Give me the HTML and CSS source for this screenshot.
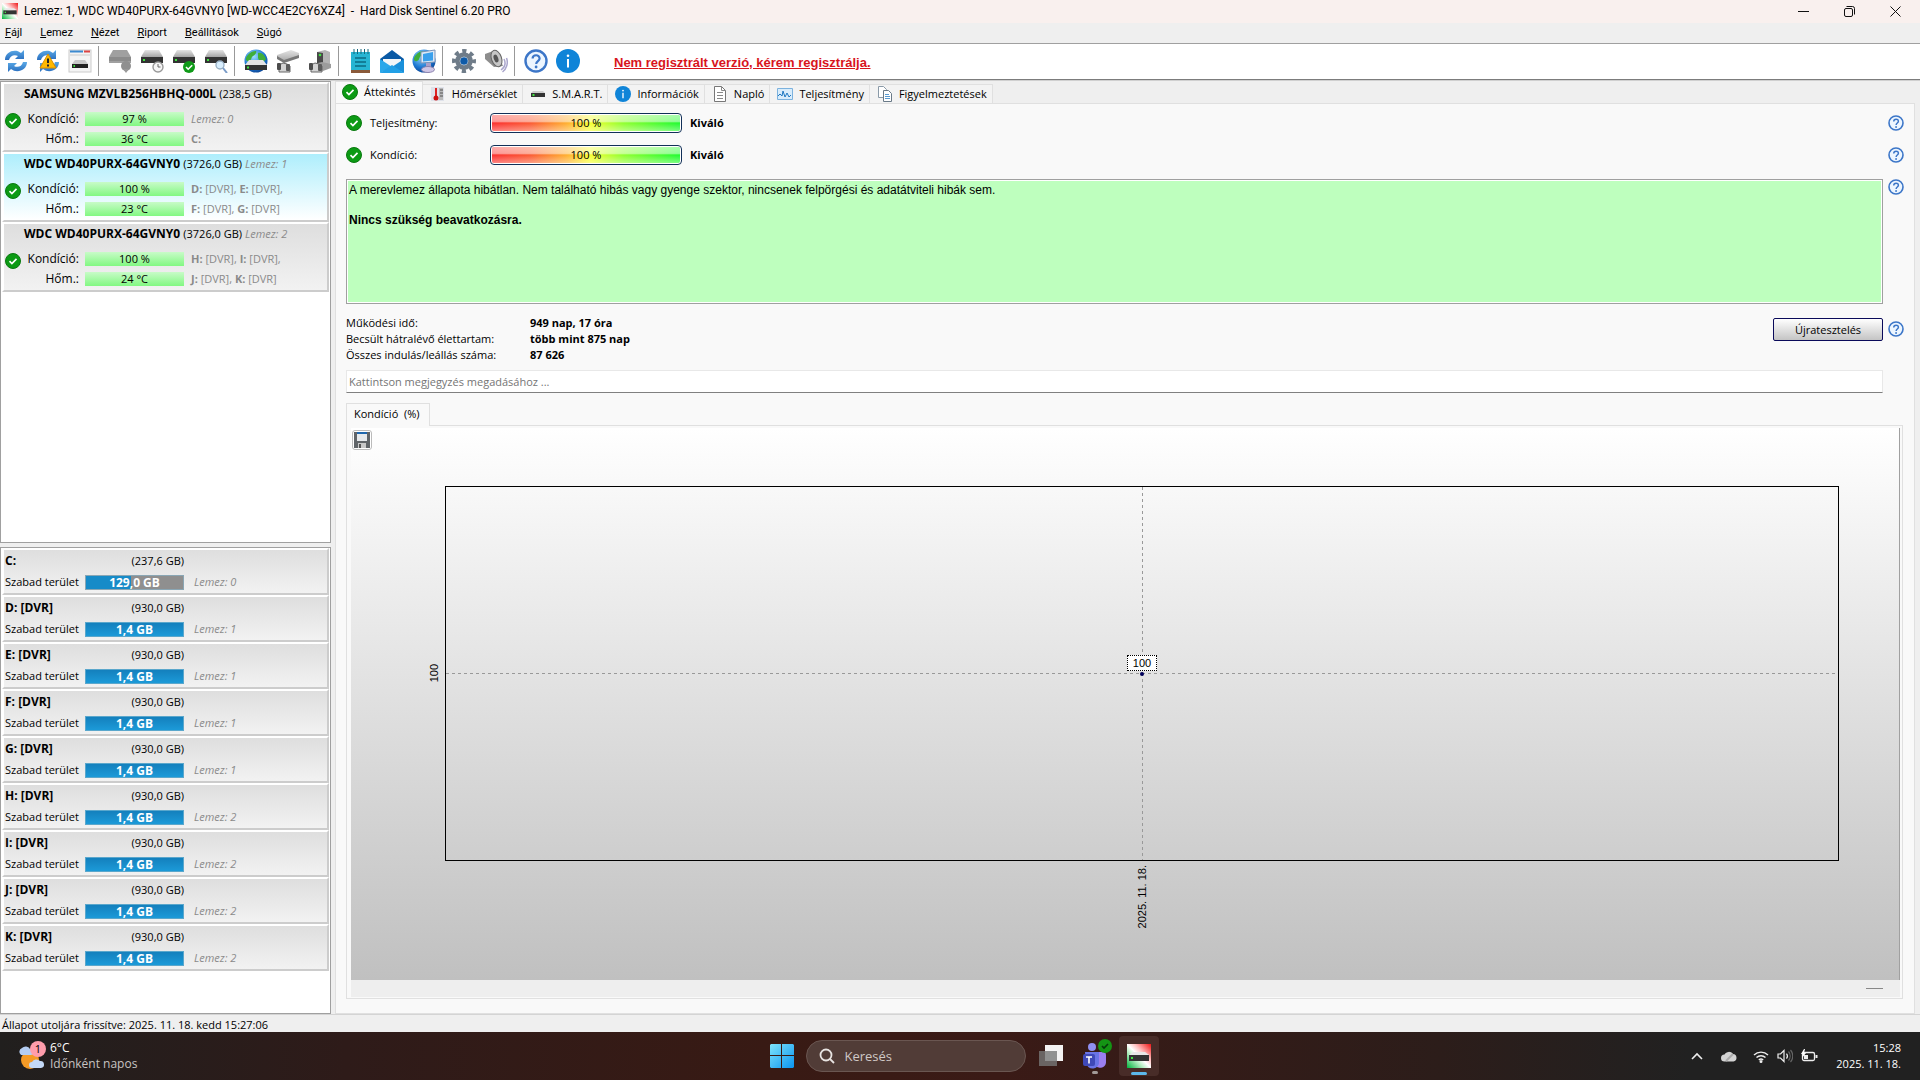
FILE: index.html
```
<!DOCTYPE html>
<html lang="hu">
<head>
    <meta charset="UTF-8">
    <meta name="viewport" content="width=device-width, initial-scale=1.0">
    <title>Hard Disk Sentinel</title>
    <link rel="stylesheet" href="styles.css">
</head>
<body>
    <!-- Shared icons -->
    <svg class="defs" width="0" height="0" aria-hidden="true">
        <defs>
            <linearGradient id="gBlue" x1="0" y1="0" x2="0" y2="1"><stop offset="0" stop-color="#5aa9e6"/><stop offset="1" stop-color="#2a6fc0"/></linearGradient>
            <linearGradient id="gGrey" x1="0" y1="0" x2="0" y2="1"><stop offset="0" stop-color="#e4e4e4"/><stop offset="1" stop-color="#a4a4a4"/></linearGradient>
            <linearGradient id="gApp" x1="0" y1="1" x2="1" y2="0"><stop offset="0" stop-color="#00b43c"/><stop offset=".35" stop-color="#b8efc4"/><stop offset=".5" stop-color="#ffffff"/><stop offset=".65" stop-color="#ffc4c4"/><stop offset="1" stop-color="#ee1515"/></linearGradient>
            <radialGradient id="gGlobe" cx=".4" cy=".3" r=".8"><stop offset="0" stop-color="#9fe0ff"/><stop offset=".6" stop-color="#1b76d2"/><stop offset="1" stop-color="#0a3a86"/></radialGradient>
            <symbol id="i-ok" viewBox="0 0 16 16">
                <circle cx="8" cy="8" r="7.5" fill="#0c9a14" stroke="#0a7a10"/>
                <path d="M4.5 8.2l2.4 2.3 4.6-4.6" fill="none" stroke="#fff" stroke-width="1.7"/>
            </symbol>
            <symbol id="i-info" viewBox="0 0 24 24">
                <circle cx="12" cy="12" r="12" fill="#0f84d8"/>
                <circle cx="12" cy="6.8" r="1.3" fill="#fff"/><path d="M12 10v8.5" stroke="#fff" stroke-width="2"/>
            </symbol>
            <symbol id="i-help" viewBox="0 0 24 24">
                <circle cx="12" cy="12" r="10.5" fill="#edf6ff" stroke="#3c76c8" stroke-width="2.4"/>
                <path d="M8.6 9.6c0-4.4 7-4.4 7-.2 0 2.6-3.4 2.8-3.4 5.6" fill="none" stroke="#3c76c8" stroke-width="2.2"/>
                <circle cx="12.1" cy="18" r="1.4" fill="#3c76c8"/>
            </symbol>
            <symbol id="i-refresh" viewBox="0 0 24 24">
                <path d="M1 11C1 4 8 .5 14 2.300l3 1.700L20 1v9h-9l3-3C10.500 5 6 6.500 5 11z" fill="url(#gBlue)"/>
                <path d="M23 13c0 7-7 10.500-13 8.700l-3-1.700L4 23v-9h9l-3 3c3.500 2 8 .5 9-4z" fill="url(#gBlue)"/>
            </symbol>
            <symbol id="i-disk" viewBox="0 0 24 24">
                <path d="M5 1h14l4 7H1z" fill="url(#gGrey)"/>
                <rect x="1" y="8" width="22" height="6" fill="#333"/>
                <rect x="3" y="10" width="2" height="2" fill="#3fe23f"/>
            </symbol>
            <symbol id="i-app" viewBox="0 0 24 24">
                <path d="M0 0h24v24H0z" fill="url(#gApp)"/>
                <path d="M6 8h12l4 3H2z" fill="#e8e8e8"/>
                <path d="M2 11h20v6H2z" fill="#333"/><rect x="4" y="13" width="2" height="2" fill="#3fe23f"/>
            </symbol>
            <symbol id="i-globe" viewBox="0 0 24 24">
                <circle cx="12" cy="12" r="11.500" fill="url(#gGlobe)"/>
                <path d="M3 7c3-4 6-5 9-5 1 2-1 4-3 5s-1 4-4 5-4-2-2-5zM14 4c4-1 7 3 8 6l-3 4c-3 0-4-3-5-5z" fill="#3fae3a"/>
            </symbol>
            <symbol id="i-handshake" viewBox="0 0 24 24">
                <path d="M3 16l4-2 4 1 3 2v6H3z" fill="#d4d4d4" stroke="#666"/>
                <rect x="1" y="14" width="4" height="7" rx="1" fill="#4c4c4c"/><rect x="10" y="15" width="4" height="7" rx="1" fill="#5c5c5c"/>
            </symbol>
        </defs>
    </svg>

    <header class="titlebar">
        <svg class="icon16"><use href="#i-app"/></svg>
        <h1>Lemez: 1, WDC WD40PURX-64GVNY0 [WD-WCC4E2CY6XZ4]&nbsp; -&nbsp; Hard Disk Sentinel 6.20 PRO</h1>
        <div class="window-controls">
            <button aria-label="Kis méret"><svg width="11" height="11"><path d="M0 5.500h11" stroke="#111"/></svg></button>
            <button aria-label="Előző méret"><svg width="11" height="11" fill="none" stroke="#111"><rect x=".5" y="2.500" width="8" height="8" rx="1.500"/><path d="M2.500 .5h6a2 2 0 0 1 2 2v6"/></svg></button>
            <button aria-label="Bezárás"><svg width="11" height="11"><path d="M.5 .5l10 10M10.500 .5l-10 10" stroke="#111"/></svg></button>
        </div>
    </header>

    <nav class="menu">
        <button><u>F</u>ájl</button>
        <button><u>L</u>emez</button>
        <button><u>N</u>ézet</button>
        <button><u>R</u>iport</button>
        <button><u>B</u>eállítások</button>
        <button><u>S</u>úgó</button>
    </nav>

    <div class="toolbar">
        <button aria-label="Frissítés"><svg><use href="#i-refresh"/></svg></button>
        <button aria-label="Frissítés figyelmeztetéssel"><svg viewBox="0 0 24 24"><use href="#i-refresh"/><path d="M12 5l8 14H4z" fill="#ffb900" stroke="#d98f00" stroke-linejoin="round"/><path d="M12 9.500v4.500M12 15.500v2" stroke="#222" stroke-width="2"/></svg></button>
        <button aria-label="Lemezpanel"><svg viewBox="0 0 24 24"><rect x="1" y="1" width="22" height="22" fill="#f4f4f4" stroke="#ccc"/><path d="M2 2.500h13" stroke="#3c8ad0" stroke-width="2"/><path d="M16 2.500h6" stroke="#d44" stroke-width="2"/><path d="M2 6h20" stroke="#ccc"/><path d="M7 11h10l3 4H4z" fill="#c8c8c8"/><path d="M4 15h16v4H4z" fill="#222"/><path d="M5.500 16h1.500v2H5.500z" fill="#3fe23f"/></svg></button>
        <span class="sep"></span>
        <button aria-label="Lemez leállítása" disabled><svg viewBox="0 0 24 24"><path d="M5 1h14l4 7v6H1V8z" fill="#a0a0a0"/><path d="M1 8h22v4H1z" fill="#8b8b8b"/><circle cx="18" cy="17" r="5" fill="#8f8f8f"/><path d="M15 20l3 4 3-4z" fill="#999"/></svg></button>
        <button aria-label="Rövid teszt"><svg viewBox="0 0 24 24"><use href="#i-disk"/><circle cx="18" cy="18" r="5" fill="#f6f6f6" stroke="#999" stroke-width="1.400"/><path d="M18 15v3h2.500" fill="none" stroke="#666"/></svg></button>
        <button aria-label="Teljes teszt"><svg viewBox="0 0 24 24"><use href="#i-disk"/><circle cx="17" cy="18" r="6" fill="#0f9a18"/><path d="M14 18l2.200 2.200 4-4" fill="none" stroke="#fff" stroke-width="1.600"/></svg></button>
        <button aria-label="Felület teszt"><svg viewBox="0 0 24 24"><use href="#i-disk"/><circle cx="16" cy="16" r="4" fill="#d9efff" stroke="#9ab0c4" stroke-width="1.400"/><path d="M19 19l4 5" stroke="#7a9cc8" stroke-width="2"/></svg></button>
        <span class="sep"></span>
        <button aria-label="Online"><svg viewBox="0 0 24 24"><use href="#i-globe"/><path d="M5 11h14l4 5H1z" fill="#e4e4e4"/><path d="M1 16h22v5H1z" fill="#333"/><path d="M3 17.500h2v2H3z" fill="#3fe23f"/></svg></button>
        <button aria-label="Lemez csatlakozó"><svg viewBox="0 0 24 24"><path d="M1 6l14-5 8 3v4L8 13 1 9z" fill="url(#gGrey)"/><path d="M1 7l7 4 15-5v3L8 14 1 10z" fill="#777"/><use href="#i-handshake"/></svg></button>
        <button aria-label="Lemez művelet"><svg viewBox="0 0 24 24"><path d="M9 3l8-2 5 2v13l-6 3-7-3z" fill="#b4b4b4"/><path d="M9 3l6 1v12l-6-2z" fill="#484848"/><circle cx="12" cy="6" r="1.300" fill="#3fe23f"/><path d="M6 15l8-2 9 2v4l-8 3z" fill="#9c9c9c"/><use href="#i-handshake"/></svg></button>
        <span class="sep"></span>
        <button aria-label="Riport"><svg viewBox="0 0 24 24"><path d="M3 3h19v19H3z" fill="#27b5d3"/><path d="M3 21h19v3H3z" fill="#8a5a3a"/><path d="M6 0v5M9.500 0v5M13 0v5M16.500 0v5M20 0v5" stroke="#17677a"/><path d="M7 9h11M7 13h11M7 17h11" stroke="#0c6b84" stroke-width="1.500"/></svg></button>
        <button aria-label="E-mail"><svg viewBox="0 0 24 24"><path d="M0 10L12 1l12 9v4H0z" fill="#0b5aa5"/><path d="M3 10h18v5l-9 6-9-6z" fill="#f3f6f8"/><path d="M0 10l12 8-12 6z" fill="#2aa8ea"/><path d="M24 10l-12 8 12 6z" fill="#1a90da"/><path d="M0 24l12-8 12 8z" fill="#22a0e6"/></svg></button>
        <button aria-label="Hálózat"><svg viewBox="0 0 24 24"><svg x="0" y="0" width="15" height="15"><use href="#i-globe"/></svg><path d="M9 3l14-2v12L9 14z" fill="#dce8f6" stroke="#7b93b8"/><path d="M11 5l10-2v8.500l-10 1z" fill="#3aa0ec"/><path d="M14 14h5v5h-5z" fill="#a99fc8"/><ellipse cx="16" cy="20.500" rx="6.500" ry="3" fill="#cfc6e6" stroke="#8a82ad"/></svg></button>
        <span class="sep"></span>
        <button aria-label="Beállítások"><svg viewBox="0 0 24 24"><circle cx="12" cy="12" r="10" fill="none" stroke="#6f7c89" stroke-width="4" stroke-dasharray="4.200 3.654" stroke-dashoffset="2.100"/><circle cx="12" cy="12" r="6.500" fill="#fff" stroke="#6f7c89" stroke-width="4.500"/><circle cx="12" cy="12" r="3.800" fill="#0e5aa8"/></svg></button>
        <button aria-label="Hang"><svg viewBox="0 0 24 24"><path d="M1 5L12 1l7 16-9 1-9-8z" fill="#8d8d8d"/><ellipse cx="12.500" cy="9.500" rx="5" ry="8.500" transform="rotate(-20 12.500 9.500)" fill="#c6c6c6" stroke="#666"/><ellipse cx="12" cy="9.500" rx="2.200" ry="4" transform="rotate(-20 12 9.500)" fill="#555"/><path d="M20 10c2 4 1 8-3 11M22.500 9c2 5 0 11-4 14" fill="none" stroke="#aaa6cc" stroke-width="1.500"/></svg></button>
        <span class="sep"></span>
        <button aria-label="Súgó"><svg><use href="#i-help"/></svg></button>
        <button aria-label="Névjegy"><svg><use href="#i-info"/></svg></button>
        <a class="register" href="#">Nem regisztrált verzió, kérem regisztrálja.</a>
    </div>

    <main>
        <aside class="sidebar">
            <section class="list">
                <article class="disk">
                    <h2>SAMSUNG MZVLB256HBHQ-000L <small>(238,5 GB)</small></h2>
                    <svg class="icon16"><use href="#i-ok"/></svg>
                    <span class="label">Kondíció:</span><span class="bar">97 %</span><i>Lemez: 0</i>
                    <span class="label">Hőm.:</span><span class="bar">36 °C</span><span class="parts"><b>C:</b></span>
                </article>
                <article class="disk selected">
                    <h2>WDC WD40PURX-64GVNY0 <small>(3726,0 GB) <i>Lemez: 1</i></small></h2>
                    <svg class="icon16"><use href="#i-ok"/></svg>
                    <span class="label">Kondíció:</span><span class="bar">100 %</span><span class="parts"><b>D:</b> [DVR], <b>E:</b> [DVR],</span>
                    <span class="label">Hőm.:</span><span class="bar">23 °C</span><span class="parts"><b>F:</b> [DVR], <b>G:</b> [DVR]</span>
                </article>
                <article class="disk">
                    <h2>WDC WD40PURX-64GVNY0 <small>(3726,0 GB) <i>Lemez: 2</i></small></h2>
                    <svg class="icon16"><use href="#i-ok"/></svg>
                    <span class="label">Kondíció:</span><span class="bar">100 %</span><span class="parts"><b>H:</b> [DVR], <b>I:</b> [DVR],</span>
                    <span class="label">Hőm.:</span><span class="bar">24 °C</span><span class="parts"><b>J:</b> [DVR], <b>K:</b> [DVR]</span>
                </article>
            </section>

            <section class="list">
                <article class="drive">
                    <h2>C:</h2><span class="size">(237,6 GB)</span>
                    <span>Szabad terület</span><span class="bar half">129,0 GB</span><i>Lemez: 0</i>
                </article>
                <article class="drive">
                    <h2>D: [DVR]</h2><span class="size">(930,0 GB)</span>
                    <span>Szabad terület</span><span class="bar">1,4 GB</span><i>Lemez: 1</i>
                </article>
                <article class="drive">
                    <h2>E: [DVR]</h2><span class="size">(930,0 GB)</span>
                    <span>Szabad terület</span><span class="bar">1,4 GB</span><i>Lemez: 1</i>
                </article>
                <article class="drive">
                    <h2>F: [DVR]</h2><span class="size">(930,0 GB)</span>
                    <span>Szabad terület</span><span class="bar">1,4 GB</span><i>Lemez: 1</i>
                </article>
                <article class="drive">
                    <h2>G: [DVR]</h2><span class="size">(930,0 GB)</span>
                    <span>Szabad terület</span><span class="bar">1,4 GB</span><i>Lemez: 1</i>
                </article>
                <article class="drive">
                    <h2>H: [DVR]</h2><span class="size">(930,0 GB)</span>
                    <span>Szabad terület</span><span class="bar">1,4 GB</span><i>Lemez: 2</i>
                </article>
                <article class="drive">
                    <h2>I: [DVR]</h2><span class="size">(930,0 GB)</span>
                    <span>Szabad terület</span><span class="bar">1,4 GB</span><i>Lemez: 2</i>
                </article>
                <article class="drive">
                    <h2>J: [DVR]</h2><span class="size">(930,0 GB)</span>
                    <span>Szabad terület</span><span class="bar">1,4 GB</span><i>Lemez: 2</i>
                </article>
                <article class="drive">
                    <h2>K: [DVR]</h2><span class="size">(930,0 GB)</span>
                    <span>Szabad terület</span><span class="bar">1,4 GB</span><i>Lemez: 2</i>
                </article>
            </section>
        </aside>

        <section class="content">
            <div class="tabs">
                <button class="active"><svg class="icon16"><use href="#i-ok"/></svg>Áttekintés</button>
                <button><svg class="icon16" viewBox="0 0 16 16"><path d="M1 1h13v14H1z" fill="#dfe2ea"/><path d="M9 2h4v12H9z" fill="#b9b9b9"/><path d="M10 4h3M10 7h3M10 10h3" stroke="#555"/><path d="M6 2v9" stroke="#d22" stroke-width="2"/><circle cx="6" cy="12" r="2.500" fill="#c11"/></svg>Hőmérséklet</button>
                <button><svg class="icon16" viewBox="0 0 16 16"><path d="M3 5h10l2 2H1z" fill="#ccc"/><path d="M1 7h14v4H1z" fill="#333"/><path d="M2.500 8h2v2h-2z" fill="#3fe23f"/></svg>S.M.A.R.T.</button>
                <button><svg class="icon16"><use href="#i-info"/></svg>Információk</button>
                <button><svg class="icon16" viewBox="0 0 16 16"><path d="M2.500 .5h7l4 4v11h-11z" fill="#fff" stroke="#777"/><path d="M9.500 .5v4h4M5 6.500h6M5 9.500h6M5 12.500h6" fill="none" stroke="#888"/></svg>Napló</button>
                <button><svg class="icon16" viewBox="0 0 16 16"><path d="M.5 2.500h15v11H.5z" fill="#d8ecfb" stroke="#7cb2de"/><path d="M1 10l2-2 2 2 1-5 2 6 2-4 2 4 2-2" fill="none" stroke="#1f78c2"/></svg>Teljesítmény</button>
                <button><svg class="icon16" viewBox="0 0 16 16"><path d="M1.500 .5h5l3 3v8h-8z" fill="#fff" stroke="#8a9aa8"/><path d="M6.500 4.500h5l3 3v8h-8z" fill="#fff" stroke="#6a7a88"/><path d="M8 8.500h4M8 10.500h5M8 12.500h5" stroke="#5a9ad0"/></svg>Figyelmeztetések</button>
            </div>

            <div class="page">
                <div class="row gauge-row">
                    <svg class="icon16"><use href="#i-ok"/></svg>
                    <span class="name">Teljesítmény:</span>
                    <div class="gauge">100 %</div>
                    <b>Kiváló</b>
                    <button class="help" aria-label="Súgó"><svg class="icon16"><use href="#i-help"/></svg></button>
                </div>
                <div class="row gauge-row">
                    <svg class="icon16"><use href="#i-ok"/></svg>
                    <span class="name">Kondíció:</span>
                    <div class="gauge">100 %</div>
                    <b>Kiváló</b>
                    <button class="help" aria-label="Súgó"><svg class="icon16"><use href="#i-help"/></svg></button>
                </div>

                <div class="row message-row">
                    <div class="message">
                        <p>A merevlemez állapota hibátlan. Nem található hibás vagy gyenge szektor, nincsenek felpörgési és adatátviteli hibák sem.</p>
                        <p><b>Nincs szükség beavatkozásra.</b></p>
                    </div>
                    <button class="help" aria-label="Súgó"><svg class="icon16"><use href="#i-help"/></svg></button>
                </div>

                <div class="row stats-row">
                    <dl class="stats">
                        <dt>Működési idő:</dt><dd>949 nap, 17 óra</dd>
                        <dt>Becsült hátralévő élettartam:</dt><dd>több mint 875 nap</dd>
                        <dt>Összes indulás/leállás száma:</dt><dd>87 626</dd>
                    </dl>
                    <button class="retest">Újratesztelés</button>
                    <button class="help" aria-label="Súgó"><svg class="icon16"><use href="#i-help"/></svg></button>
                </div>

                <input class="comment" type="text" aria-label="Megjegyzés" placeholder="Kattintson megjegyzés megadásához ...">

                <div class="chart-tabs"><button>Kondíció&nbsp; (%)</button></div>
                <div class="chart-page">
                    <div class="chart">
                        <button class="save" aria-label="Mentés"><svg class="icon16" viewBox="0 0 16 16"><path d="M0 0h16v16H0z" fill="#606468"/><path d="M3 2h10v7H3z" fill="#e6e9ec"/><path d="M3 0h10v2H3z" fill="#1f67ae"/><path d="M4 11h8v5H4z" fill="#c8c8c8"/><path d="M5 12h2v4H5z" fill="#555"/></svg></button>
                        <span class="y-label">100</span>
                        <div class="plot">
                            <span class="point"></span>
                            <span class="tip">100</span>
                        </div>
                        <span class="x-label">2025. 11. 18.</span>
                    </div>
                    <div class="zoom-bar"><span></span></div>
                </div>
            </div>
        </section>
    </main>

    <div class="status">Állapot utoljára frissítve: 2025. 11. 18. kedd 15:27:06</div>

    <footer class="taskbar">
        <button class="weather">
            <svg width="28" height="30" viewBox="0 0 28 30"><circle cx="12" cy="19" r="9" fill="#f49a26"/><path d="M3 14a4 4 0 0 1 1-7 5 5 0 0 1 8 1 3 3 0 0 1 1 6z" fill="#b4cdf2"/><path d="M14 27a3 3 0 0 1 0-6 5 5 0 0 1 8-1 3.500 3.500 0 0 1 1 7z" fill="#c3d8f6"/><circle cx="20" cy="8" r="8" fill="#ff9dab"/><text x="20" y="12" text-anchor="middle">1</text></svg>
            <span><b>6°C</b><br>Időnként napos</span>
        </button>
        <div class="apps">
            <button aria-label="Start"><svg width="24" height="24"><defs><linearGradient id="gWin" x1="0" y1="0" x2="1" y2="1"><stop offset="0" stop-color="#7fe4fb"/><stop offset="1" stop-color="#0a94f0"/></linearGradient></defs><path d="M1 0h10v11H0V1zM12 0h11l1 1v10H12zM0 12h11v12H1l-1-1zM12 12h12v11l-1 1H12z" fill="url(#gWin)"/></svg></button>
            <label class="search">
                <svg width="16" height="16" fill="none" stroke="#e8e4e2" stroke-width="1.800"><circle cx="7" cy="7" r="5.500"/><path d="M11 11l4 4"/></svg>
                <input type="text" placeholder="Keresés" aria-label="Keresés">
            </label>
            <button aria-label="Feladatnézet"><svg width="24" height="24"><path d="M6 1h18v16H6z" fill="#f4f2f2"/><path d="M0 7h18v15H0z" fill="#777" fill-opacity=".8"/></svg></button>
            <button class="teams" aria-label="Teams"><svg width="30" height="36" viewBox="0 0 30 36"><circle cx="9" cy="9" r="4" fill="#8f8ff0"/><path d="M12 14h9a3 3 0 0 1 2 3v6a6 6 0 0 1-11 4z" fill="#9a7ff0"/><path d="M2 14h14v9a6 6 0 0 1-13 2z" fill="#6a74e6"/><rect x="0" y="16" width="12" height="12" rx="2" fill="#3f49b8"/><path d="M3 19h6M6 19v6.500" stroke="#fff" stroke-width="1.600"/><circle cx="22" cy="8" r="7" fill="#149414"/><path d="M19 8l2 2 4-4" fill="none" stroke="#053a0a" stroke-width="1.600"/><rect x="9" y="33" width="6" height="3" rx="1.500" fill="#a29a98"/></svg></button>
            <button class="running" aria-label="Hard Disk Sentinel"><svg width="24" height="24"><use href="#i-app"/></svg></button>
        </div>
        <div class="tray">
            <svg width="12" height="8"><path d="M1 7l5-5 5 5" fill="none" stroke="#eee" stroke-width="1.600"/></svg>
            <svg class="cloud" width="16" height="12"><path d="M3.500 11.500a3.500 3.500 0 0 1 0-7A5 5 0 0 1 12 4a3.800 3.800 0 0 1 .5 7.500z" fill="#d4d4d4"/><path d="M5 11l7-7" stroke="#aaa" stroke-width="2"/></svg>
            <svg width="16" height="13" fill="none" stroke="#eee" stroke-width="1.400"><path d="M1 5a10 10 0 0 1 14 0M3.500 7.500a6.500 6.500 0 0 1 9 0M5.800 10a3.400 3.400 0 0 1 4.400 0"/><circle cx="8" cy="11.500" r=".8"/></svg>
            <svg width="16" height="14" fill="none" stroke="#eee" stroke-width="1.200"><path d="M1 5h2.500L7 1.500v11L3.500 9H1z"/><path d="M9.500 4.500a4 4 0 0 1 0 5"/><path d="M11.500 2.500a7 7 0 0 1 0 9M13.500 1a9 9 0 0 1 0 12" stroke="#666"/></svg>
            <svg width="17" height="14"><rect x="1.500" y="3.500" width="12" height="8" rx="1.500" fill="none" stroke="#eee" stroke-width="1.300"/><path d="M3 6h4v4H3zM14.500 6h2v3h-2z" fill="#eee"/><path d="M3 0L0 5h2L1 9l4-5H3l1-4z" fill="#fff"/></svg>
            <time>15:28<br>2025. 11. 18.</time>
        </div>
    </footer>
</body>
</html>
```
FILE: styles.css
```
:root {
    --face: #efefef;
    --page: #f9f9f9;
    --border: #a0a0a0;
    --light-border: #e0e0e0;
    --muted: #8a8a8a;
}

* {
    margin: 0;
    padding: 0;
    box-sizing: border-box;
}

body {
    height: 100vh;
    padding-right: 11px;
    display: flex;
    flex-direction: column;
    background: #fff;
    color: #000;
    font: 11px/16px "Open Sans", "Noto Sans", sans-serif;
}

button, input {
    font: inherit;
    color: inherit;
    background: none;
    border: none;
}

svg {
    display: block;
    flex: none;
}

.defs {
    position: absolute;
}

.icon16 {
    width: 16px;
    height: 16px;
}

/* Title and menu */
.titlebar {
    height: 23px;
    padding: 0 2px 1px;
    display: flex;
    align-items: center;
    gap: 6px;
    background: #f9f0ee;
}

.titlebar h1 {
    flex: 1;
    font: 12px/20px Roboto, sans-serif;
}

.window-controls {
    display: flex;
}

.window-controls button {
    width: 46px;
    height: 20px;
    display: flex;
    align-items: center;
    justify-content: center;
}

.menu {
    height: 20px;
    padding-left: 5px;
    display: flex;
    gap: 18px;
    background: var(--face);
    font-family: Roboto, sans-serif;
}

/* Toolbar */
.toolbar {
    height: 38px;
    padding-bottom: 1px;
    display: flex;
    align-items: center;
    background: #fff;
    border-top: 1px solid var(--border);
    border-bottom: 2px groove #d0d0d0;
}

.toolbar button {
    width: 32px;
    height: 32px;
    padding: 4px;
}

.toolbar svg {
    width: 24px;
    height: 24px;
}

.toolbar .sep {
    width: 6px;
    height: 30px;
    margin-left: 2px;
    border-left: 1px solid #999;
}

.register {
    margin: 3px 0 0 30px;
    color: #d8141c;
    font: bold 13px/16px "Liberation Sans", Arial, sans-serif;
}

main {
    flex: 1;
    min-height: 0;
    display: flex;
    gap: 4px;
    background: var(--face);
}

/* Disk and drive lists */
.sidebar {
    width: 331px;
    display: grid;
    grid-template-rows: 461fr 466fr;
    gap: 4px;
}

.list {
    min-height: 0;
    overflow: hidden;
    padding: 0 1px;
    background: #fff;
    border: 1px solid var(--border);
}

.list article {
    display: grid;
    align-items: center;
    border: 2px solid;
    border-color: #fff #ccc #ccc #fff;
    background: linear-gradient(#dedede, #f2f2f2);
    white-space: nowrap;
}

.list h2 {
    align-self: start;
    font-size: 12px;
    line-height: 18px;
}

.list i {
    color: var(--muted);
}

.bar {
    height: 14px;
    line-height: 14px;
    text-align: center;
}

.list .disk {
    height: 70px;
    padding: 1px 0 0 1px;
    grid-template: 24px 20px 20px / 16px 58px 99px 1fr;
    column-gap: 3px;
}

.list .selected {
    background: linear-gradient(#aeeefc, #fff);
}

.disk h2 {
    grid-column: 1 / -1;
    padding-left: 19px;
}

.disk small {
    font-size: 11px;
    font-weight: normal;
}

.disk .icon16 {
    grid-row: 2 / 4;
    align-self: start;
    margin-top: 4px;
}

.disk .label {
    font-size: 12px;
    text-align: right;
    padding-right: 3px;
}

.disk .bar {
    background: linear-gradient(#c8fbc8, #82f882);
}

.disk .bar + * {
    padding-left: 4px;
}

.parts {
    color: var(--muted);
}

.list .drive {
    height: 47px;
    padding: 2px 0 0 1px;
    grid-template: 20px 1fr / 80px 99px 1fr;
}

.drive .size {
    grid-column: 2 / 4;
    align-self: start;
    width: 99px;
    line-height: 18px;
    text-align: right;
}

.drive .bar {
    height: 15px;
    line-height: 13px;
    color: #fff;
    font-size: 12px;
    font-weight: bold;
    border: 1px solid #5aa7cc;
    background: linear-gradient(#1480bd, #1c9ad8);
}

.drive .bar.half {
    border-color: #8aa6b4;
    background: linear-gradient(90deg, #178bc8 46%, #8f8f8f 46%);
}

.drive i {
    padding-left: 10px;
}

/* Right side */
.content {
    flex: 1;
    min-width: 0;
    display: flex;
    flex-direction: column;
    padding-right: 5px;
}

.tabs {
    display: flex;
    align-items: flex-end;
    height: 22px;
}

.tabs button {
    height: 19px;
    padding: 0 5px 0 7px;
    display: flex;
    align-items: center;
    gap: 6px;
    background: #f3f3f3;
    border: 1px solid var(--light-border);
    border-width: 1px 1px 0 0;
}

.tabs .active {
    height: 23px;
    margin-bottom: -1px;
    padding: 0 6px 3px 6px;
    background: var(--page);
    border-left-width: 1px;
}

.page {
    flex: 1;
    min-height: 0;
    display: flex;
    flex-direction: column;
    padding: 3px 10px 14px;
    background: var(--page);
    border: 1px solid var(--light-border);
}

.row {
    display: flex;
    align-items: center;
}

.help {
    margin-left: 5px;
}

.gauge-row {
    height: 32px;
}

.gauge-row .name {
    width: 120px;
    margin-left: 8px;
}

.gauge-row b {
    margin-left: 8px;
}

.gauge-row .help {
    margin-left: auto;
}

.gauge {
    width: 192px;
    height: 20px;
    padding: 1px;
    line-height: 16px;
    text-align: center;
    border: 1px solid #123058;
    border-radius: 4px;
    background: linear-gradient(rgba(255, 255, 255, .6), rgba(255, 255, 255, .5) 40%, rgba(255, 255, 255, 0) 50%, rgba(255, 255, 255, .4)) content-box,
        linear-gradient(90deg, #fb3030, #fb5a34 20%, #ffb030 40%, #f8ff30 52%, #90ff30 70%, #20fb30) content-box, #fff;
}

.message-row {
    margin-top: 8px;
    align-items: flex-start;
}

.message {
    flex: 1;
    height: 125px;
    padding: 3px 2px;
    background: #beffbe;
    border: 1px solid var(--border);
    box-shadow: inset 0 0 0 1px #fff;
    font: 12px/15px "Liberation Sans", Arial, sans-serif;
}

.message p + p {
    margin-top: 15px;
}

.stats-row {
    margin: 11px 0 7px;
}

.stats {
    flex: 1;
    display: grid;
    grid-template-columns: 184px 1fr;
}

.stats dd {
    font-weight: bold;
}

.retest {
    width: 110px;
    height: 23px;
    align-self: flex-start;
    margin-top: 3px;
    border: 1px solid #0a0a5a;
    border-radius: 2px;
    background: linear-gradient(#fff, #c4c4c4);
}

.retest + .help {
    align-self: flex-start;
    margin-top: 6px;
}

.comment {
    height: 23px;
    flex: none;
    margin-right: 21px;
    padding: 0 2px;
    background: #fff;
    border: 1px solid #e8e8e8;
    border-bottom-color: #808080;
}

.comment::placeholder {
    color: #757575;
    opacity: 1;
}

/* Chart */
.chart-tabs {
    margin-top: 10px;
}

.chart-tabs button {
    height: 23px;
    padding: 0 9px 2px 7px;
    display: block;
    position: relative;
    margin-bottom: -1px;
    background: var(--page);
    border: 1px solid var(--light-border);
    border-bottom: none;
}

.chart-page {
    flex: 1;
    min-height: 0;
    display: flex;
    flex-direction: column;
    margin-right: 1px;
    padding: 2px 2px 1px 4px;
    border: 1px solid var(--light-border);
}

.chart {
    flex: 1;
    min-height: 0;
    display: grid;
    grid-template: 58px 1fr 119px / 94px 1fr 60px;
    background: linear-gradient(#fff, #c0c0c0);
    border-right: 1px solid var(--border);
    font: 11px/12px "Liberation Sans", Arial, sans-serif;
}

.save {
    width: 20px;
    height: 20px;
    margin: 2px 1px;
    padding: 1px;
    border: 1px solid #bbb;
    border-radius: 3px;
    background: #fff;
}

.y-label {
    grid-area: 2 / 1;
    justify-self: end;
    align-self: center;
    margin-right: 5px;
    writing-mode: vertical-rl;
    transform: rotate(180deg);
}

.plot {
    grid-area: 2 / 2;
    position: relative;
    border: 1px solid #000;
    background:
        repeating-linear-gradient(90deg, #999 0 3px, transparent 3px 6px) 0 50% / 100% 1px no-repeat,
        repeating-linear-gradient(#999 0 3px, transparent 3px 6px) 50% 0 / 1px 100% no-repeat;
}

.point, .tip {
    position: absolute;
    left: 50%;
    top: 50%;
}

.point {
    width: 4px;
    height: 4px;
    margin: -2px;
    border-radius: 50%;
    background: #00005a;
}

.tip {
    width: 30px;
    height: 16px;
    margin: -19px 0 0 -15px;
    line-height: 14px;
    text-align: center;
    background: #fff;
    border: 1px dotted #000;
}

.x-label {
    grid-area: 3 / 2;
    justify-self: center;
    align-self: start;
    margin-top: 4px;
    writing-mode: vertical-rl;
    transform: rotate(180deg);
}

.zoom-bar {
    height: 17px;
    padding: 8px 17px 0;
    display: flex;
    justify-content: flex-end;
    background: #eee;
}

.zoom-bar span {
    width: 17px;
    height: 1px;
    background: #888;
}

.status {
    height: 18px;
    padding-left: 2px;
    line-height: 19px;
    background: var(--face);
    border-top: 1px solid #d4d4d4;
}

/* Taskbar */
.taskbar {
    height: 48px;
    display: grid;
    grid-template-columns: 1fr auto 1fr;
    align-items: center;
    color: #fff;
    background: linear-gradient(90deg, #211f1e, #2e1b19 18%, #381a14 40%, #3a1a16 52%, #2c1d1a 75%, #212121 88%);
}

.weather {
    padding-left: 18px;
    display: flex;
    align-items: center;
    gap: 4px;
    text-align: left;
    font-size: 12px;
    color: #c8c4c2;
}

.weather b {
    color: #fff;
    font-weight: normal;
}

.weather text {
    font-size: 11px;
}

.apps {
    display: flex;
    align-items: center;
}

.apps button {
    width: 40px;
    height: 40px;
    display: flex;
    align-items: center;
    justify-content: center;
}

.search {
    width: 220px;
    height: 32px;
    margin: 0 5px 0 4px;
    padding-left: 12px;
    display: flex;
    align-items: center;
    gap: 10px;
    background: #513c37;
    border: 1px solid #6a5651;
    border-radius: 16px;
}

.search input {
    width: 150px;
    font-size: 13px;
}

.search input::placeholder {
    color: #d0c8c6;
    opacity: 1;
}

.apps .teams {
    width: 48px;
    padding-left: 6px;
}

.apps .running {
    position: relative;
    background: #482c28;
    border-radius: 4px;
}

.running::after {
    content: "";
    position: absolute;
    bottom: 1px;
    left: 12px;
    width: 16px;
    height: 3px;
    border-radius: 2px;
    background: #5cb8ec;
}

.tray {
    display: flex;
    align-items: center;
    justify-content: flex-end;
    gap: 8px;
    padding-right: 19px;
}

.cloud {
    margin: 0 8px 0 10px;
}

.tray time {
    margin-left: 10px;
    text-align: right;
}
```
